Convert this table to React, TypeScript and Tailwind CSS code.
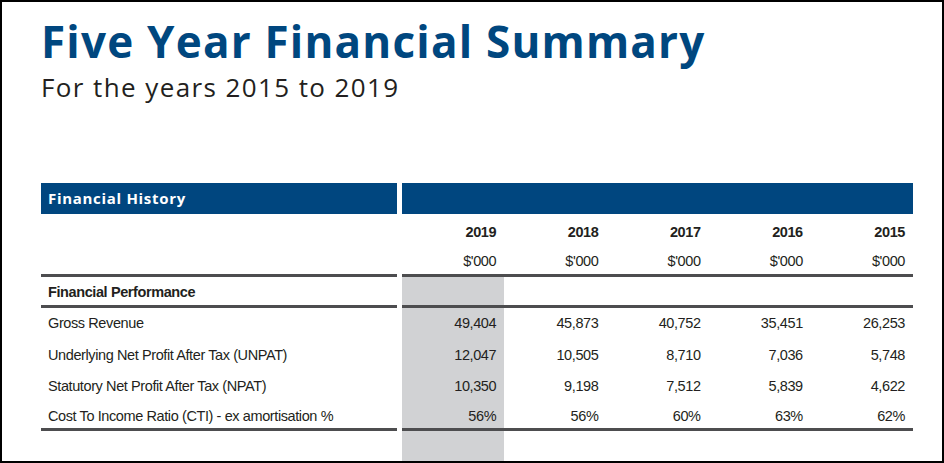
const years = ['2019', '2018', '2017', '2016', '2015'];

const rows = [
  { label: 'Gross Revenue', values: ['49,404', '45,873', '40,752', '35,451', '26,253'], h: 'h-[32px]', pad: '' },
  { label: 'Underlying Net Profit After Tax (UNPAT)', values: ['12,047', '10,505', '8,710', '7,036', '5,748'], h: 'h-[31px]', pad: '' },
  { label: 'Statutory Net Profit After Tax (NPAT)', values: ['10,350', '9,198', '7,512', '5,839', '4,622'], h: 'h-[31px]', pad: '' },
  { label: 'Cost To Income Ratio (CTI) - ex amortisation %', values: ['56%', '56%', '60%', '63%', '62%'], h: 'h-[26px]', pad: 'pt-[3px]' },
];

const Rule = () => (
  <div className="flex h-[3px]">
    <div className="w-[356px] bg-[#4d4d4f]" />
    <div className="w-[5px]" />
    <div className="w-[511px] bg-[#4d4d4f]" />
  </div>
);

const Row = ({
  label,
  values,
  className = '',
  pad = '',
  bold = false,
  boldLabel = false,
  shaded = true,
}: {
  label?: string;
  values?: string[];
  className?: string;
  pad?: string;
  bold?: boolean;
  boldLabel?: boolean;
  shaded?: boolean;
}) => (
  <div className={`flex ${className}`}>
    <div className={`flex w-[356px] items-center pl-[7px] ${pad} ${bold || boldLabel ? 'font-bold' : ''}`}>{label}</div>
    <div className="w-[5px]" />
    <div className="grid w-[511px] grid-cols-5">
      {[0, 1, 2, 3, 4].map((i) => (
        <div
          key={i}
          className={`flex items-center justify-end pr-2 ${pad} ${i === 0 && shaded ? 'bg-[#d1d2d4]' : ''} ${bold ? 'font-bold' : ''}`}
        >
          {values ? values[i] : ''}
        </div>
      ))}
    </div>
  </div>
);

export default function App() {
  return (
    <div className="box-border flex h-[463px] w-[944px] flex-col border-2 border-black bg-white pl-[39px]">
      <h1 className="mt-[13px] font-['Open_Sans',sans-serif] text-[44px] leading-[52px] font-bold tracking-[1.2px] text-[#00477f]">
        Five Year Financial Summary
      </h1>
      <p className="mt-[5px] font-['Open_Sans',sans-serif] text-[26px] leading-[30px] tracking-[1.4px] text-[#231f20]">
        For the years 2015 to 2019
      </p>

      <div className="mt-[81px] flex h-[31px]">
        <div className="flex w-[356px] items-center bg-[#00467f] pl-[7px] font-['Open_Sans',sans-serif] text-[15px] font-bold tracking-[0.7px] text-white">
          Financial History
        </div>
        <div className="w-[5px]" />
        <div className="w-[511px] bg-[#00467f]" />
      </div>

      <div className="flex flex-1 flex-col font-['Liberation_Sans',Arial,sans-serif] text-[14.5px] tracking-[-0.4px] text-[#231f20]">
        <Row values={years} bold shaded={false} className="h-[36px]" pad="pt-[2px]" />
        <Row values={years.map(() => "$'000")} shaded={false} className="h-[24px]" />
        <Rule />
        <Row label="Financial Performance" boldLabel className="h-[28px]" pad="pt-[4px]" />
        <Rule />
        {rows.map((r) => (
          <Row key={r.label} label={r.label} values={r.values} className={r.h} pad={r.pad} />
        ))}
        <Rule />
        <Row className="flex-1" />
      </div>
    </div>
  );
}
